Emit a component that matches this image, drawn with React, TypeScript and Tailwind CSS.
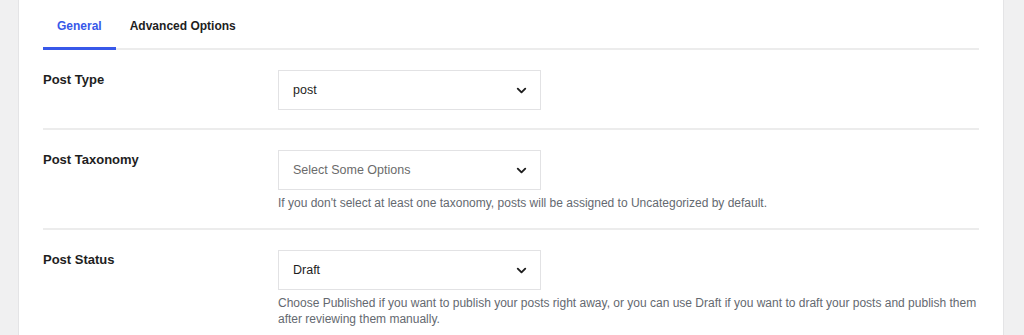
import { ChevronDown } from 'lucide-react'

const font = { fontFamily: '"Liberation Sans", Arial, sans-serif' }

function Select({ value, placeholder }: { value?: string; placeholder?: string }) {
  return (
    <div className="flex h-10 w-[263px] items-center justify-between border border-[#e2e2e4] bg-white pl-[14px] pr-[11px]">
      <span className={`text-[12.5px] ${value ? 'text-[#1e1e1e]' : 'text-[#6b6b6b]'}`}>{value ?? placeholder}</span>
      <ChevronDown size={15} strokeWidth={3} className="text-[#1e1e1e]" />
    </div>
  )
}

function Row({
  label,
  children,
  help,
  last,
}: {
  label: string
  children: React.ReactNode
  help?: React.ReactNode
  last?: boolean
}) {
  return (
    <div className={`flex pt-5 ${last ? '' : 'border-b-2 border-[#ececec]'} ${help ? 'pb-[17px]' : 'pb-[18px]'}`}>
      <div className="w-[235px] text-[13px] font-bold leading-5 text-[#1e1e1e]">{label}</div>
      <div className="flex-1">
        {children}
        {help && <p className="mt-[5px] text-[12px] leading-4 text-[#646970]">{help}</p>}
      </div>
    </div>
  )
}

export default function App() {
  return (
    <div className="flex h-[335px] w-full bg-[#f0f0f1]" style={font}>
      <div className="ml-[18px] mr-[20px] flex-1 overflow-hidden border-x border-[#e4e4e6] bg-white px-6">
        <div className="flex border-b-2 border-[#ececec] pt-[17px]">
          <button className="-mb-[2px] border-b-[3px] border-[#3858e9] px-[14px] pb-[12px] text-[12px] font-bold leading-[18px] text-[#3858e9]">
            General
          </button>
          <button className="-mb-[2px] border-b-[3px] border-transparent px-[14px] pb-[12px] text-[12px] font-bold leading-[18px] text-[#1e1e1e]">
            Advanced Options
          </button>
        </div>

        <Row label="Post Type">
          <Select value="post" />
        </Row>
        <Row
          label="Post Taxonomy"
          help="If you don't select at least one taxonomy, posts will be assigned to Uncategorized by default."
        >
          <Select placeholder="Select Some Options" />
        </Row>
        <Row
          label="Post Status"
          last
          help="Choose Published if you want to publish your posts right away, or you can use Draft if you want to draft your posts and publish them after reviewing them manually."
        >
          <Select value="Draft" />
        </Row>
      </div>
    </div>
  )
}
